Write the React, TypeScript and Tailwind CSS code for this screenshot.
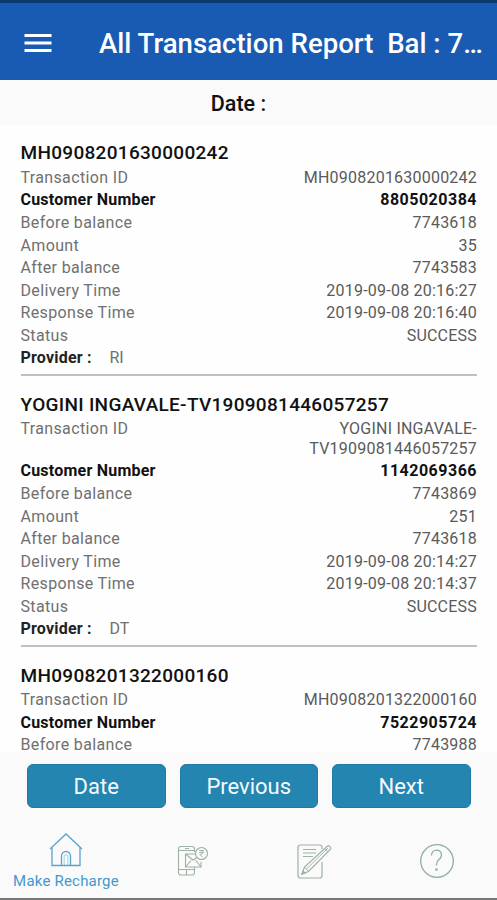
import { MdMenu } from "react-icons/md";

interface Transaction {
  id: string;
  customer: string;
  before: string;
  amount?: string;
  after?: string;
  delivery?: string;
  response?: string;
  status?: string;
  provider?: string;
}

const transactions: Transaction[] = [
  {
    id: "MH0908201630000242",
    customer: "8805020384",
    before: "7743618",
    amount: "35",
    after: "7743583",
    delivery: "2019-09-08 20:16:27",
    response: "2019-09-08 20:16:40",
    status: "SUCCESS",
    provider: "RI",
  },
  {
    id: "YOGINI INGAVALE-TV1909081446057257",
    customer: "1142069366",
    before: "7743869",
    amount: "251",
    after: "7743618",
    delivery: "2019-09-08 20:14:27",
    response: "2019-09-08 20:14:37",
    status: "SUCCESS",
    provider: "DT",
  },
  {
    id: "MH0908201322000160",
    customer: "7522905724",
    before: "7743988",
  },
];

interface RowProps {
  label: string;
  value?: string;
  bold?: boolean;
}

function Row({ label, value, bold }: RowProps) {
  if (!value) return null;
  return (
    <div
      className={
        bold
          ? "flex justify-between pt-[1.5px] pb-[1.57px] font-bold text-[#111]"
          : "flex justify-between pt-[1.5px] pb-[1.57px] text-[#707070]"
      }
    >
      <p className={bold ? "tracking-[0.22px]" : "tracking-[0.35px]"}>{label}</p>
      <p
        className={
          bold
            ? "w-[180px] text-right tracking-[0.5px]"
            : "w-[180px] text-right tracking-[0.22px] text-[#5a5a5a]"
        }
      >
        {value}
      </p>
    </div>
  );
}

function TransactionItem({ item }: { item: Transaction }) {
  return (
    <div className="pt-[15.5px] text-[16px] leading-[19.5px]">
      <h2 className="mb-[1.2px] text-[19px] leading-[25px] font-medium tracking-[0.3px] text-[#111]">
        {item.id}
      </h2>
      <Row label="Transaction ID" value={item.id} />
      <Row label="Customer Number" value={item.customer} bold />
      <Row label="Before balance" value={item.before} />
      <Row label="Amount" value={item.amount} />
      <Row label="After balance" value={item.after} />
      <Row label="Delivery Time" value={item.delivery} />
      <Row label="Response Time" value={item.response} />
      <Row label="Status" value={item.status} />
      {item.provider && (
        <div className="flex border-b-2 border-[#c0c0c0] pt-[1.5px] pb-[6.300px]">
          <p className="w-[89px] font-bold tracking-[0.2px] text-[#222]">Provider :</p>
          <p className="text-[#707070]">{item.provider}</p>
        </div>
      )}
    </div>
  );
}

function HomeIcon() {
  return (
    <svg width="34" height="36" viewBox="0 0 34 36" fill="none" stroke="#5aa3d0" strokeWidth="1.3">
      <path d="M1 17 17 2l16 15" />
      <path d="M3 15.5V33.500h28V15.500" />
      <path d="M12.500 33.500V24a4.500 4.500 0 0 1 9 0v9.500" />
      <path d="M15.200 33.500V24.500a1.800 1.800 0 0 1 3.600 0v9" strokeWidth="0.5" />
    </svg>
  );
}

function RechargeIcon() {
  return (
    <svg width="32" height="32" viewBox="0 0 32 32" fill="none" stroke="#9db1a4" strokeWidth="1.100">
      <path d="M17.500 7V4a2.500 2.500 0 0 0-2.500-2.500H4A2.500 2.500 0 0 0 1.500 4v23.500A2.500 2.500 0 0 0 4 30h11a2.500 2.500 0 0 0 2.500-2.500V22" />
      <path d="M1.500 5.500h16M1.500 24.500h16M9.500 24.500V30M8 3.500h4" />
      <path d="M18 9H8.500v13h15.500v-5" />
      <path d="m8.500 9 7.500 6 4-2.500M8.500 22l5.500-6.500M24 22l-5.500-7" />
      <circle cx="24.500" cy="8.500" r="6" />
      <path d="M22 5.500h5M22 7.500h5M23 5.500c4 0 3.500 4 0 4l2.800 3" strokeWidth="0.9" />
    </svg>
  );
}

function NoteIcon() {
  return (
    <svg width="36" height="36" viewBox="0 0 36 36" fill="none" stroke="#9db1a4" strokeWidth="1.200">
      <path d="M25 6V4.500A2.500 2.500 0 0 0 22.500 2h-19A2.500 2.500 0 0 0 1 4.500v28A2.500 2.500 0 0 0 3.500 35h19a2.500 2.500 0 0 0 2.500-2.500V19" />
      <path d="M6 6.500h13M6 10h13M6 13.500h10" />
      <path d="m5 31 2.500-7L30.500 3c1.500-1 4 1.500 3 3.200L11.500 28.500 5 31Z" />
      <path d="m7.500 24 4 4.500M9.500 26 31 5M27.500 5.500l3.700 3.500" strokeWidth="0.9" />
      <path d="m5 31 1-3 2 2Z" fill="#9db1a4" />
    </svg>
  );
}

function HelpIcon() {
  return (
    <svg width="36" height="36" viewBox="0 0 36 36" fill="none" stroke="#8fb09d" strokeWidth="1.300">
      <circle cx="18" cy="18" r="16.300" />
      <path d="M12.500 12.500c0-7 10-7 10-.5 0 4.500-5 4.500-5 9v1.500" />
      <circle cx="17.500" cy="26.500" r="0.700" />
    </svg>
  );
}

export default function App() {
  return (
    <div className="flex h-[900px] w-[497px] flex-col overflow-hidden bg-[#fefefe] font-[Roboto,sans-serif]">
      <header className="flex h-20 shrink-0 items-center border-t-[3px] border-[#0a3a70] bg-[#195bb2] pt-[5px] pl-5 text-white">
        <MdMenu className="mb-[3px] h-9 w-9" />
        <h1 className="ml-[43px] text-[27.600px] font-medium whitespace-pre">
          All Transaction Report{"  "}Bal : 7…
        </h1>
      </header>

      <div className="flex h-[44.700px] shrink-0 items-center justify-center bg-[#fafafa] pt-[3px] pr-5 text-[21.500px] font-medium text-[#111]">
        Date :
      </div>

      <main className="min-h-0 flex-1 overflow-hidden pr-5 pl-[20.500px]">
        {transactions.map((item) => (
          <TransactionItem key={item.id} item={item} />
        ))}
      </main>

      <footer className="h-[148px] shrink-0 border-b-2 border-[#777] bg-[#fafafa]">
        <div className="flex gap-[14px] pt-[12px] pl-[27px]">
          {["Date", "Previous", "Next"].map((text) => (
            <button
              key={text}
              className="h-[43.500px] w-[138.500px] rounded-[6px] border border-[#2079a5] bg-[#2485b0] pt-px text-[22px] text-[#f4fbff]"
            >
              {text}
            </button>
          ))}
        </div>
        <nav className="flex">
          <div className="flex w-[132px] flex-col items-center pt-[24px]">
            <HomeIcon />
            <p className="mt-[3px] text-[15px] leading-[20px] tracking-[0.200px] text-[#4398cf]">
              Make Recharge
            </p>
          </div>
          <div className="flex w-[121px] justify-center pt-[37px]">
            <RechargeIcon />
          </div>
          <div className="flex w-[123px] justify-center pt-[35px]">
            <NoteIcon />
          </div>
          <div className="flex w-[121px] justify-center pt-[35px]">
            <HelpIcon />
          </div>
        </nav>
      </footer>
    </div>
  );
}
